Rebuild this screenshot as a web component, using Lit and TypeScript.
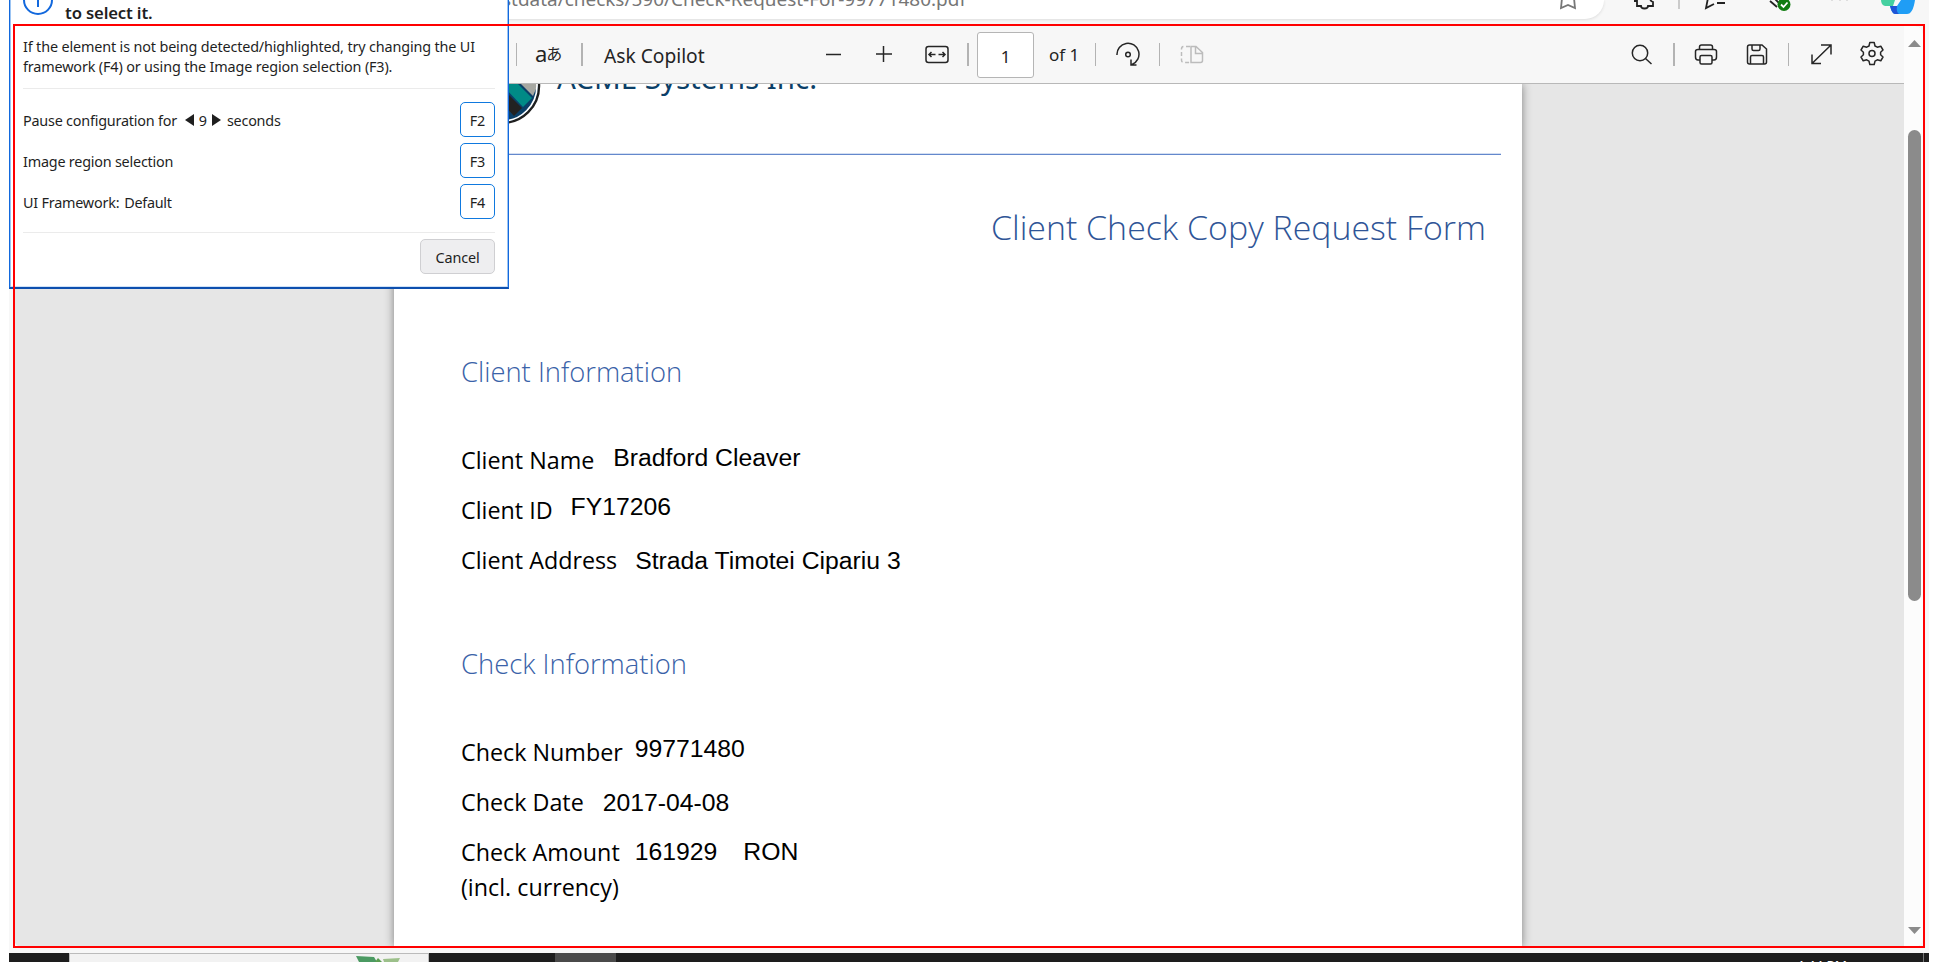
import { LitElement, html, css, svg } from "lit";
import { customElement } from "lit/decorators.js";

const icon = (x: number, w: number, body: unknown, cls = "") => html`
  <svg class="icon ${cls}" style="margin-left:${x}px" width=${w} height="26" viewBox="0 0 ${w} 26">${body}</svg>`;

@customElement("inspector-panel")
export class InspectorPanel extends LitElement {
  static styles = css`
    :host { display: block; box-sizing: border-box; width: 500px; height: 289px; background: #fff;
      border: 2px solid #1268dd; border-width: 0 1px 2px 1px; box-shadow: inset -1px 0 #9cc4f3, inset 1px 0 #9cc4f3, inset 0 -1px #cfe2f8;
      border-bottom-color: #0d4fae;
      font: 14.4px/20px "Noto Sans", sans-serif; letter-spacing: -0.15px; color: #1f1f1f; padding: 0 13px; overflow: hidden; }
    .head { display: flex; height: 24px; }
    .head svg { margin-top: -15px; display: block; }
    .head b { margin: 2px 0 0 12px; font-size: 16.7px; line-height: 22px; font-weight: 600; white-space: nowrap; }
    .hint { margin-top: 13px; height: 51px; border-bottom: 1px solid #ebebeb; white-space: nowrap; }
    .rows { padding-top: 13px; display: grid; gap: 6px; height: 144px; box-sizing: border-box; border-bottom: 1px solid #ebebeb; align-content: start; letter-spacing: -0.22px; }
    .row { height: 35px; display: flex; align-items: center; }
    .row > span:not(.key) { padding-top: 2px; }
    .key { margin-left: auto; width: 35px; height: 35px; box-sizing: border-box; border: 1px solid #0f79df; border-radius: 5px; text-align: center; line-height: 35px; }
    .tri { width: 9px; height: 12px; margin: 0 5px 0; }
    .foot { margin-top: 6px; display: flex; justify-content: flex-end; }
    .btn { width: 75px; height: 35px; box-sizing: border-box; border: 1px solid #cfcfd2; border-radius: 5px; background: #eeeef0; text-align: center; line-height: 35px; }
    .for { margin-right: 3px; }
    .sec { margin-left: 1px; }
    .fw { margin-left: 5px; letter-spacing: -0.3px; }
  `;
  render() {
    return html`
      <div class="head">
        <svg width="30" height="30" viewBox="0 0 30 30"><circle cx="15" cy="15" r="14" fill="none" stroke="#1268dd" stroke-width="2"/><path d="M15 8V22" stroke="#1268dd" stroke-width="2"/></svg>
        <b>to select it.</b>
      </div>
      <div class="hint">If the element is not being detected/highlighted, try changing the UI<br />framework (F4) or using the Image region selection (F3).</div>
      <div class="rows">
        <div class="row"><span class="for">Pause configuration for</span>
          <svg class="tri" viewBox="0 0 9 12"><path d="M9 0V12L0 6Z" fill="#1f1f1f"/></svg><span>9</span>
          <svg class="tri" viewBox="0 0 9 12"><path d="M0 0V12L9 6Z" fill="#1f1f1f"/></svg><span class="sec">seconds</span>
          <span class="key">F2</span></div>
        <div class="row"><span>Image region selection</span><span class="key">F3</span></div>
        <div class="row"><span>UI Framework:</span><span class="fw">Default</span><span class="key">F4</span></div>
      </div>
      <div class="foot"><span class="btn">Cancel</span></div>`;
  }
}

@customElement("pdf-toolbar")
export class PdfToolbar extends LitElement {
  static styles = css`
    :host { display: flex; position: relative; z-index: 1; box-sizing: border-box; height: 58px; background: #f7f7f7; border-bottom: 1px solid #b8b8b8;
      padding-left: 501px; align-items: flex-start; font: 20px/26px "Noto Sans", sans-serif; color: #242424; white-space: nowrap; }
    .icon { flex: none; margin-top: 15px; stroke: #262626; stroke-width: 1.5; fill: none; display: block; }
    .icon.off { stroke: #bcbcbc; }
    .sep { flex: none; width: 1px; height: 23px; margin-top: 17px; background: #b3b3b3; }
    .sep.w { width: 2px; }
    .aa { margin: 14px 0 0 18px; width: 27px; font-size: 22px; display: flex; }
    .jp { font: 400 16px/27px "Noto Sans CJK JP", sans-serif; margin-left: -1px; }
    .ask { margin: 17px 0 0 21px; width: 95px; font-size: 19.2px; }
    .page { box-sizing: border-box; width: 57px; height: 46px; margin: 6px 0 0 8px; border: 1px solid #b5b5b5; border-radius: 3px; background: #fff; text-align: center; font-size: 17px; line-height: 47px; }
    .of { margin: 16px 0 0 15px; width: 28px; font-size: 17px; }
    .fill { flex: 1; }
  `;
  render() {
    return html`
      <span class="sep" style="margin-left:6px"></span>
      <span class="aa">a<span class="jp">あ</span></span>
      <span class="sep w" style="margin-left:19px"></span>
      <span class="ask">Ask Copilot</span>
      ${icon(126, 16, svg`<path d="M1 13.5H16"/>`)}
      ${icon(34, 17, svg`<path d="M1 13H17M8.500 5V21"/>`)}
      ${icon(33, 24, svg`<rect x="1" y="5.500" width="22" height="16" rx="2.500"/><path d="M4 13.500H10.500M6.500 11L4 13.500L6.500 16M20 13.500H13.500M17.500 11L20 13.500L17.500 16"/>`)}
      <span class="sep w" style="margin-left:18px"></span>
      <span class="page">1</span><span class="of">of 1</span>
      <span class="sep" style="margin-left:18px"></span>
      ${icon(20, 24, svg`<path d="M1 14A11 11 0 1 1 16 23.500M15 18.500V24H20.500"/><circle cx="12" cy="13.500" r="2.300"/>`)}
      <span class="sep" style="margin-left:19px"></span>
      ${icon(20, 24, svg`<path d="M11 5.500H16L22.500 11.500V19.500Q22.500 21.500 20.500 21.500H11ZM15.500 5.500V12.500H22.500"/><path d="M10 5.500H4Q1.500 5.500 1.500 8V19Q1.500 21.500 4 21.500H10" stroke-dasharray="4 2.500"/>`, "off")}
      <span class="fill"></span>
      ${icon(0, 21, svg`<circle cx="9" cy="12" r="7.700"/><path d="M14.500 17.500L20.500 23"/>`)}
      <span class="sep w" style="margin-left:21px"></span>
      ${icon(19, 24, svg`<path d="M6 19H4Q1.500 19 1.500 16V10.500Q1.500 8.500 4 8.500H20Q22.500 8.500 22.500 10.500V16Q22.500 19 20 19H18M5.500 8V6Q5.500 4 7.500 4H16.500Q18.500 4 18.500 6V8"/><rect x="6" y="14.500" width="12" height="8.500" rx="1.500"/>`)}
      ${icon(28, 22, svg`<path d="M3.500 4H16L20.500 8V21Q20.500 23 18.500 23H3.500Q1.500 23 1.500 21V6Q1.500 4 3.500 4ZM6 4V8Q6 9.500 7.500 9.500H12.500Q14 9.500 14 8V4M4.500 23V16Q4.500 14.500 6 14.500H16Q17.500 14.500 17.500 16V23"/>`)}
      <span class="sep" style="margin-left:20px"></span>
      ${icon(21, 23, svg`<path d="M2 22.500L21 4M11 4H21V13.500M2 13.500V22.500H11"/>`)}
      ${icon(27, 24, svg`<path d="M9.800 1.500H14.200L15 5L17.300 6.200L20.800 5.200L23 9L20.600 11.200V13.800L23 16L20.800 19.800L17.300 18.800L15 20.100L14.200 23.500H9.800L9 20.100L6.700 18.800L3.200 19.800L1 16L3.400 13.800V11.200L1 9L3.200 5.200L6.700 6.200L9 5Z" stroke-linejoin="round"/><circle cx="12" cy="12.500" r="3"/>`)}
      <span style="width:20px"></span>`;
  }
}

@customElement("app-root")
export class AppRoot extends LitElement {
  static styles = css`
    :host { display: block; position: relative; width: 1938px; height: 972px; overflow: hidden; background: #fff; }
    .browser { margin: 0 9px; height: 953px; background: #f7f7f7; display: flow-root; overflow: hidden; position: relative; }
    .address { height: 26px; display: flex; align-items: flex-start; }
    .url { height: 19px; width: 1595px; box-sizing: border-box; background: #fff; border-radius: 0 0 19px 0; box-shadow: 0 1px 3px #ddd; display: flex; padding-left: 493px; }
    .url span { margin-top: -15px; font: 18.950px/28px "Noto Sans", sans-serif; color: #767676; white-space: nowrap; }
    .chrome { display: block; margin-left: -45px; }
    .viewer { margin: 0 6px 0 5px; display: grid; grid-template-columns: 1fr 19px; height: 921px; background: #e6e6e6; overflow: hidden; border-radius: 0 8px 8px 8px; }
    .main { display: flex; flex-direction: column; min-width: 0; margin-left: -5px; }
    .paper { flex: 1; width: 1128px; margin-left: 385px; background: #fff; box-shadow: 0 0 9px rgba(0,0,0,.45); box-sizing: border-box; overflow: hidden; padding-right: 21px; }
    .brand { display: flex; height: 70px; border-bottom: 1px solid #6488cc; box-shadow: inset 0 -1px #d4dff2; }
    .logo { margin: -37px 0 0 69px; }
    .name { margin: -23px 0 0 16px; font: 29.500px/34px "Noto Sans", sans-serif; color: #0b3f68; white-space: nowrap; }
    h1 { margin: 50px 15px 0 0; text-align: right; font: 300 33.900px/44px "Open Sans", sans-serif; color: #2f5597; white-space: nowrap; }
    h2 { margin: 0; padding-left: 67px; font: 300 27.400px/36px "Open Sans", sans-serif; color: #3a62a8; white-space: nowrap; }
    .info { margin-top: 105px; } .check { margin-top: 53px; }
    .fields { padding: 53px 0 0 67px; }
    .f { display: flex; height: 50px; align-items: flex-start; font: 23.300px/34px "Open Sans", sans-serif; color: #000; white-space: nowrap; }
    .v { font: 24.750px/34px "Liberation Sans", sans-serif; }
    .scroll { background: #fcfcfc; display: flex; flex-direction: column; align-items: center; padding: 14px 0 0 2px; }
    .thumb { width: 13px; height: 471px; border-radius: 7px; background: #8b8b8b; margin: 83px 0 326px; }
    .frame { position: absolute; left: 13px; top: 24px; width: 1912px; height: 924px; box-sizing: border-box; border: 2px solid #f00; z-index: 3; }
    inspector-panel { position: absolute; left: 9px; top: 0; z-index: 2; }
    .taskbar { margin: 0 9px; height: 9px; background: #1d1d1d; display: flex; overflow: hidden; position: relative; }
    .search { margin-left: 60px; width: 360px; box-sizing: border-box; border: 1px solid #bbb; border-bottom: 0; background: #f2f2f2; padding-left: 286px; }
    .active { margin-left: 126px; width: 61px; background: #4a4a4a; }
    .clock { margin: 4px 0 0 auto; padding-right: 76px; font: 13.500px/18px "Noto Sans", sans-serif; color: #fff; white-space: nowrap; }
    .peek { width: 5px; border-left: 1px solid #777; }
  `;
  private field(label: string, value: string, gap: number, dy: number) {
    return html`<div class="f"><span>${label}</span><span class="v" style="margin:${dy}px 0 0 ${gap}px">${value}</span></div>`;
  }
  render() {
    return html`
      <div class="browser">
        <div class="address">
          <div class="url"><span>stdata/checks/590/Check-Request-For-99771480.pdf</span></div>
          <svg class="chrome" width="370" height="24" viewBox="1559 0 370 24" fill="none" stroke="#222" stroke-width="1.8">
            <path d="M1562 -2L1561 8L1568 5L1575 8L1574 -2" stroke="#777"/>
            <path d="M1634 1H1637V6H1641Q1641 8.500 1644.500 8.500T1648 6H1653V2Q1650 1 1650 -2"/>
            <path d="M1679 0V9" stroke="#c6c6c6"/>
            <path d="M1708 -2L1706 8L1714 4M1717 3H1725"/>
            <path d="M1770 1L1777 7M1774 -2L1779 3"/>
            <circle cx="1784" cy="4.500" r="6.500" fill="#107c10" stroke="none"/><path d="M1781 4.500L1783.500 7L1787.500 2.500" stroke="#fff"/>
            <path d="M1831 0h2M1839 0h2M1846 0h2" stroke="#c6c6c6" stroke-width="1"/>
            <path d="M1881 0H1895L1893 6H1885Q1881 5 1881 0Z" fill="#45d0a0" stroke="none"/>
            <path d="M1890 6H1897L1901 0H1915Q1913 14 1907 14H1895Q1892 14 1890 6Z" fill="#1f9df5" stroke="none"/><path d="M1890 6H1897Q1896 12 1899 14H1895Q1892 14 1890 6Z" fill="#1f54d6" stroke="none"/>
          </svg>
        </div>
        <div class="viewer">
          <div class="main">
            <pdf-toolbar></pdf-toolbar>
            <div class="paper">
              <div class="brand">
                <svg class="logo" width="78" height="78" viewBox="0 0 78 78"><circle cx="39" cy="39" r="37" fill="#0b3f68" stroke="#1f1f1f" stroke-width="2.500"/><path d="M38 22L54 36L69 51L60 60L42 41Z" fill="#008a86"/><path d="M57 36L70 49L75 37L70 24Z" fill="#a7a8a2"/><path d="M40 42L59 61L51 69L40 57Z" fill="#222"/><circle cx="39" cy="39" r="35" fill="none" stroke="#fff" stroke-width="1.700"/></svg>
                <span class="name">ACME Systems Inc.</span>
              </div>
              <h1>Client Check Copy Request Form</h1>
              <h2 class="info">Client Information</h2>
              <div class="fields">
                ${this.field("Client Name", "Bradford Cleaver", 19, -2)}
                ${this.field("Client ID", "FY17206", 18, -3)}
                ${this.field("Client Address", "Strada Timotei Cipariu 3", 18, 1)}
              </div>
              <h2 class="check">Check Information</h2>
              <div class="fields">
                ${this.field("Check Number", "99771480", 12, -3)}
                ${this.field("Check Date", "2017-04-08", 19, 1)}
                <div class="f"><span>Check Amount</span><span class="v" style="margin:0 0 0 15px">161929</span><span class="v" style="margin:0 0 0 26px">RON</span></div>
                <div class="f" style="margin-top:-15px"><span>(incl. currency)</span></div>
              </div>
            </div>
          </div>
          <div class="scroll">
            <svg width="13" height="7"><path d="M0 7L6.500 0L13 7Z" fill="#8b8b8b"/></svg>
            <div class="thumb"></div>
            <svg width="13" height="7"><path d="M0 0L6.500 7L13 0Z" fill="#8b8b8b"/></svg>
          </div>
        </div>
      </div>
      <div class="taskbar">
        <div class="search"><svg width="46" height="8" style="display:block"><path d="M0 2L18 3L21 8H3Z" fill="#4b9a62"/><path d="M19 8L22 4L26 8Z" fill="#5a9e50"/><path d="M27 5L44 4L42 8H28Z" fill="#9cc08a"/></svg></div>
        <div class="active"></div>
        <div class="clock">4:44 PM</div>
        <div class="peek"></div>
      </div>
      <inspector-panel></inspector-panel>
      <div class="frame"></div>`;
  }
}
